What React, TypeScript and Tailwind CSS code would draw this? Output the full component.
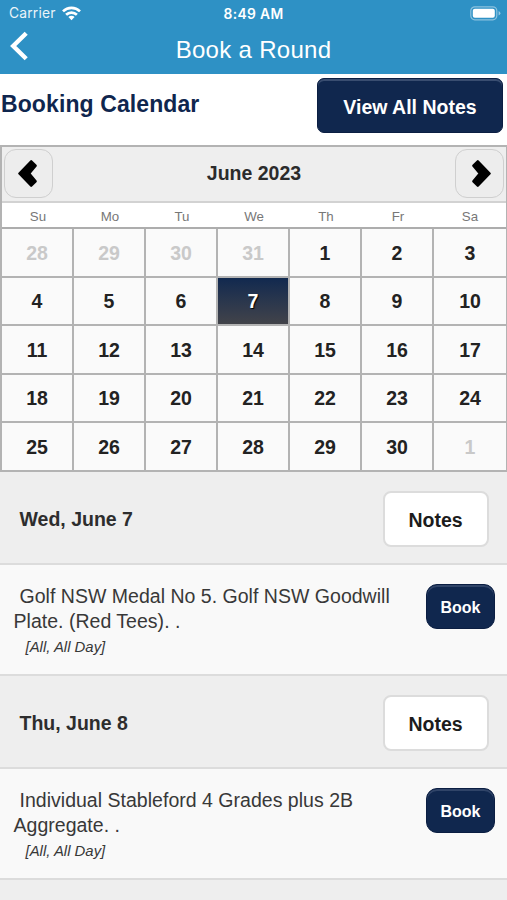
import clsx from "clsx";

type Day = { label: number; muted?: boolean };

const weekdays = ["Su", "Mo", "Tu", "We", "Th", "Fr", "Sa"];

const days: Day[] = [
  ...[28, 29, 30, 31].map((label) => ({ label, muted: true })),
  ...Array.from({ length: 30 }, (_, i) => ({ label: i + 1 })),
  { label: 1, muted: true },
];

const rounds = [
  { date: "Wed, June 7", title: "Golf NSW Medal No 5. Golf NSW Goodwill Plate. (Red Tees). .", who: "[All, All Day]" },
  { date: "Thu, June 8", title: "Individual Stableford 4 Grades plus 2B Aggregate. .", who: "[All, All Day]" },
];

const StatusBar = () => (
  <div className="grid h-[27px] grid-cols-3 items-center pl-[9px] pr-[6px] font-['Inter'] text-[13.8px]">
    <div className="flex items-center gap-[6px]">
      <span className="tracking-[0.2px] opacity-90">Carrier</span>
      <svg className="mb-px" width="19" height="15" viewBox="0 0 19 15" fill="none" stroke="white" strokeWidth="2.7">
        <path d="M1 5.4a12.2 12.2 0 0 1 17 0" />
        <path d="M4.1 8.7a7.8 7.8 0 0 1 10.8 0" />
        <path d="M9.5 14.2 6.4 11.1a4.4 4.4 0 0 1 6.2 0z" fill="white" stroke="none" />
      </svg>
    </div>
    <span className="pr-[3px] pt-px text-center font-semibold tracking-[0.35px]">8:49 AM</span>
    <svg className="justify-self-end" width="31" height="15" viewBox="0 0 31 15">
      <rect x="0.8" y="0.8" width="26" height="13" rx="4" fill="none" stroke="white" strokeOpacity="0.45" strokeWidth="1.2" />
      <rect x="2.8" y="2.8" width="22" height="9" rx="2" fill="white" />
      <path d="M28.6 5v4.6q1.8-.8 1.8-2.3T28.6 5z" fill="white" fillOpacity="0.5" />
    </svg>
  </div>
);

const NavButton = ({ next }: { next?: boolean }) => (
  <button className="flex size-[49px] items-center justify-center rounded-xl border border-[#cfcfcf] bg-[#ededed]">
    <svg
      className={clsx(next ? "ml-[3px] rotate-180" : "mr-[2px]")}
      width="19"
      height="27"
      viewBox="0 0 19 27"
      fill="black"
      stroke="black"
      strokeWidth="2.4"
      strokeLinejoin="round"
    >
      <path d="M13.2 1.3 1.4 13.5 13.2 25.7 17.6 21.3 11.2 13.5 17.6 5.7z" />
    </svg>
  </button>
);

const Calendar = () => (
  <div className="h-[327px] border-l-2 border-r border-t-2 border-[#b3b3b3]">
    <div className="flex h-[56px] items-center justify-between border-b-2 border-[#d2d2d2] bg-[#eee] pb-px pl-[2px] pr-[2px]">
      <NavButton />
      <span className="pt-px text-[19.5px] font-bold text-[#2b2b2b]">June 2023</span>
      <NavButton next />
    </div>
    <div className="grid h-[26px] grid-cols-7 items-center border-b-2 border-[#adadad] pt-[3px] text-center text-[13.3px] text-[#777]">
      {weekdays.map((day) => (
        <span key={day}>{day}</span>
      ))}
    </div>
    <div className="grid h-[243px] grid-cols-7 grid-rows-5">
      {days.map(({ label, muted }, i) => (
        <div
          key={i}
          className={clsx(
            "flex items-center justify-center border-b-2 border-[#b3b3b3] pt-[2px] text-[19.5px] font-bold",
            i % 7 !== 6 && "border-r-2",
            muted && "bg-[#fafafa] text-[#c9c9c9]",
            !muted && label !== 7 && "bg-[#fafafa] text-[#222]",
            !muted && label === 7 && "bg-linear-to-b from-[#11294f] to-[#444449] bg-origin-border text-white [text-shadow:1px_1px_1px_#000]"
          )}
        >
          {label}
        </div>
      ))}
    </div>
  </div>
);

const App = () => (
  <div className="h-[900px] w-full overflow-hidden bg-white font-['Liberation_Sans',sans-serif]">
    <header className="h-[74px] bg-[#2e91c5] text-white">
      <StatusBar />
      <div className="grid h-[46px] grid-cols-[40px_1fr_40px] items-center">
        <svg className="mb-[8px] ml-[9px]" width="20" height="30" viewBox="0 0 20 30" fill="none" stroke="white" strokeWidth="4.4">
          <path d="M17.2 2.2 4.2 15 17.2 27.8" />
        </svg>
        <h1 className="text-center text-[24px] tracking-[0.3px]">Book a Round</h1>
      </div>
    </header>

    <div className="flex h-[71px] justify-between pl-[1px] pr-[4px] pt-[4px]">
      <h2 className="pt-[9px] text-[23px] font-bold leading-[34px] tracking-[0.1px] text-[#0f264e]">Booking Calendar</h2>
      <button className="h-[55px] w-[186px] rounded-[7px] border border-[#0b1e42] bg-[#10274e] pt-[4px] text-[19.5px] font-bold text-white shadow-[inset_0_2px_0_#394d70]">
        View All Notes
      </button>
    </div>

    <Calendar />

    {rounds.map(({ date, title, who }) => (
      <section key={date}>
        <div className="flex h-[93px] items-center justify-between border-b-2 border-[#dcdcdc] bg-[#eee] pl-[19.5px] pr-[18px]">
          <span className="pt-[5px] text-[19.5px] font-bold text-[#2d2d2d]">{date}</span>
          <button className="mt-[2px] h-[56px] w-[106px] rounded-lg border-2 border-[#dcdcdc] bg-white pr-[7px] pl-[6px] pt-[4px] text-[19.5px] font-bold text-[#1c1c1c]">
            Notes
          </button>
        </div>
        <div className="flex h-[111px] justify-between border-b-2 border-[#dcdcdc] bg-[#f9f9f9] pl-[13.5px] pr-[12px] pt-[18.5px]">
          <div className="w-[392px] text-[#383838]">
            <p className="indent-[6px] text-[19.5px] leading-[25px] tracking-[0.02px]">{title}</p>
            <p className="pl-[12px] text-[14.9px] italic leading-[26px]">{who}</p>
          </div>
          <button className="h-[45px] w-[69px] rounded-[11px] border border-[#0b1e42] bg-[#10274e] pt-[3px] text-[16px] font-bold text-white shadow-[inset_0_2px_0_#304468]">
            Book
          </button>
        </div>
      </section>
    ))}
    <div className="h-5 bg-[#eee]" />
  </div>
);

export default App;
